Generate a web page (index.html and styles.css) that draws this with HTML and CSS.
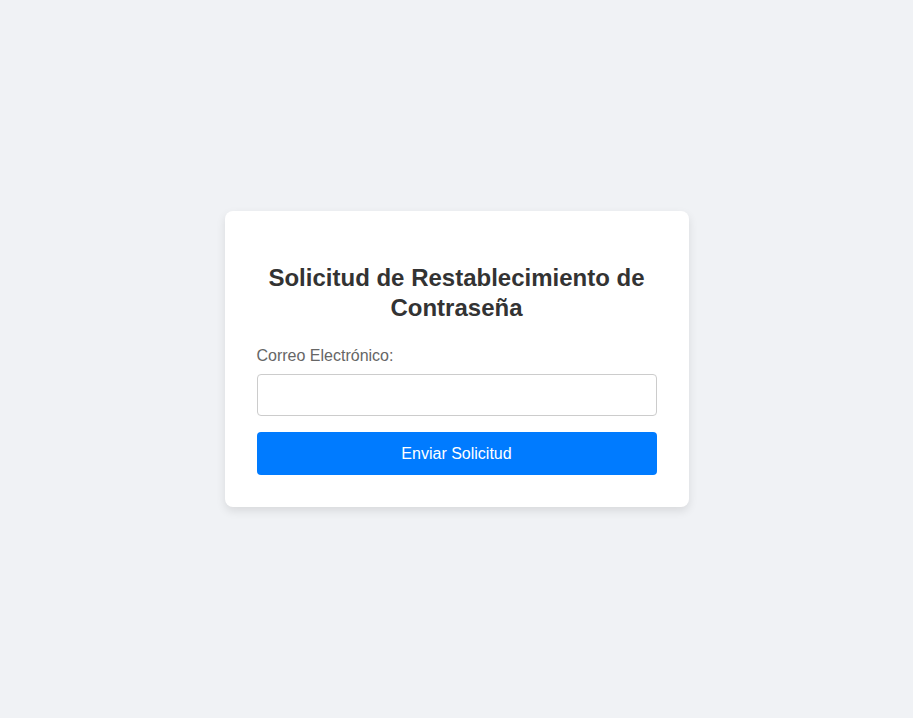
FILE: index.html
```html
<!DOCTYPE html>
<html lang="es">
<head>
<meta charset="utf-8">
<title>Solicitud de Restablecimiento de Contraseña</title>
<link rel="stylesheet" href="styles.css">
</head>
<body>
<div class="page">
  <div class="card">
    <h2 class="title">Solicitud de Restablecimiento de Contraseña</h2>
    <form class="form">
      <label class="label" for="email">Correo Electrónico:</label>
      <input class="input" id="email" type="email">
      <button class="button" type="button">Enviar Solicitud</button>
    </form>
  </div>
</div>
</body>
</html>
```

FILE: styles.css
```css
html, body {
  margin: 0;
  padding: 0;
  height: 100%;
}
body {
  background: #f0f2f5;
  font-family: "Liberation Sans", Arial, sans-serif;
}
.page {
  height: 100%;
  display: flex;
  align-items: center;
  justify-content: center;
}
.card {
  width: 400px;
  padding: 32px;
  background: #fff;
  border-radius: 8px;
  box-shadow: 0 4px 10px rgba(0, 0, 0, 0.1);
}
.title {
  margin: 20px 0 23px 0;
  font-size: 24px;
  line-height: 30px;
  font-weight: bold;
  color: #333;
  text-align: center;
}
.form {
  display: flex;
  flex-direction: column;
}
.label {
  font-size: 16px;
  line-height: 20px;
  color: #666;
  margin-bottom: 8px;
}
.input {
  box-sizing: border-box;
  height: 42px;
  padding: 10px;
  border: 1px solid #ccc;
  border-radius: 4px;
  font-size: 16px;
  margin: 0 0 16px 0;
}
.button {
  height: 43px;
  border: none;
  border-radius: 4px;
  background: #007bff;
  color: #fff;
  font-family: "Liberation Sans", Arial, sans-serif;
  font-size: 16px;
  cursor: pointer;
}
```
